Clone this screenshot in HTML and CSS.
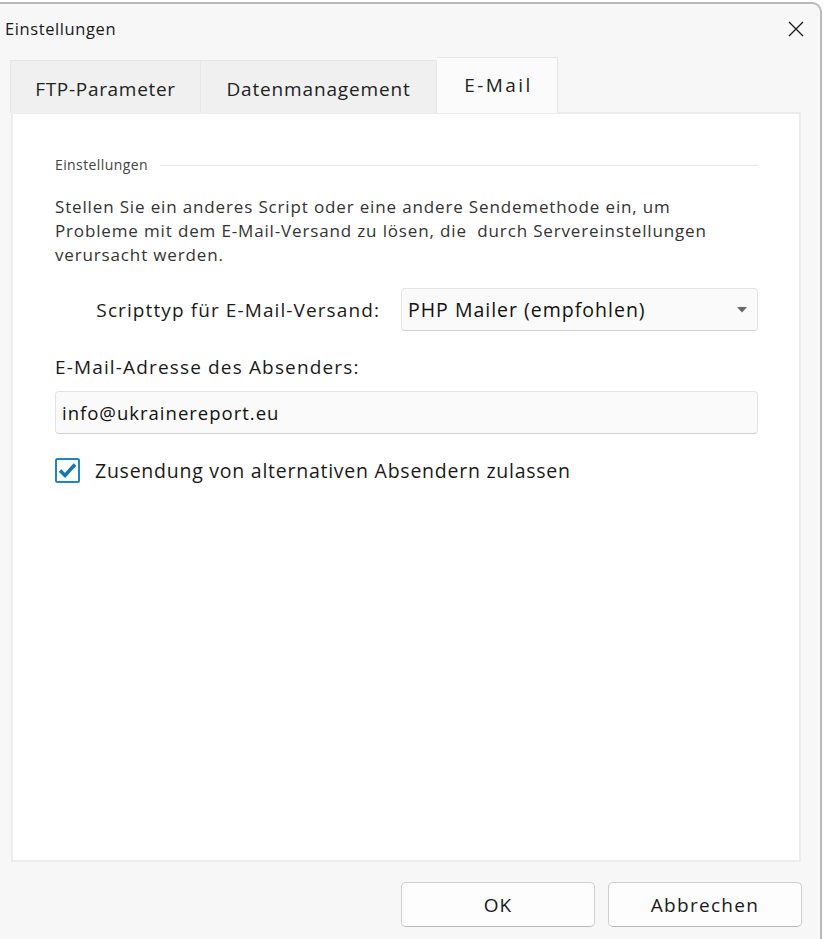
FILE: index.html
```html
<!DOCTYPE html>
<html lang="de">
<head>
<meta charset="utf-8">
<title>Einstellungen</title>
<link rel="stylesheet" href="styles.css">
</head>
<body>
<div class="window">
  <div class="titlebar">
    <span class="title">Einstellungen</span>
    <svg class="close" width="16" height="16" viewBox="0 0 16 16"><path d="M1 1 L15 15 M15 1 L1 15" stroke="#1a1a1a" stroke-width="1.3" fill="none"/></svg>
  </div>
  <div class="tabs">
    <div class="tab tab-ftp">FTP-Parameter</div>
    <div class="tab tab-data">Datenmanagement</div>
    <div class="tab active">E-Mail</div>
  </div>
  <div class="panel">
    <div class="group-head"><span>Einstellungen</span><div class="rule"></div></div>
    <p class="desc">Stellen Sie ein anderes Script oder eine andere Sendemethode ein, um<br>Probleme mit dem E-Mail-Versand zu lösen, die&nbsp; durch Servereinstellungen<br>verursacht werden.</p>
    <div class="row">
      <span class="row-label">Scripttyp für E-Mail-Versand:</span>
      <div class="select">
        <span>PHP Mailer (empfohlen)</span>
        <svg class="caret" width="10" height="6" viewBox="0 0 10 6"><path d="M0 0 H10 L5 5.5 Z" fill="#666"/></svg>
      </div>
    </div>
    <div class="field-label">E-Mail-Adresse des Absenders:</div>
    <div class="input">info@ukrainereport.eu</div>
    <div class="check">
      <svg class="box" width="25" height="25" viewBox="0 0 25 25"><rect x="1" y="1" width="23" height="23" rx="1.5" fill="#fff" stroke="#1c86c2" stroke-width="2"/><path d="M5 12.5 L10 17.5 L20 6.5" fill="none" stroke="#1677b2" stroke-width="3.6" stroke-linejoin="miter"/></svg>
      <span>Zusendung von alternativen Absendern zulassen</span>
    </div>
  </div>
  <div class="footer">
    <button class="btn btn-ok">OK</button>
    <button class="btn btn-cancel">Abbrechen</button>
  </div>
</div>
</body>
</html>
```

FILE: styles.css
```css
* { box-sizing: border-box; }
html, body { margin: 0; padding: 0; background: #ffffff; }
body { font-family: "Open Sans", "Noto Sans", sans-serif; color: #1a1a1a; }

.window {
  margin-top: 2px;
  width: 822px;
  height: 937px;
  background: #f7f7f7;
  border-top: 2px solid #b9b9b9;
  border-right: 2px solid #b9b9b9;
  border-top-right-radius: 10px;
  display: flex;
  flex-direction: column;
  padding-left: 11px;
}

.titlebar {
  height: 53px;
  display: flex;
  align-items: center;
  justify-content: space-between;
  margin-left: -6px;
  padding-right: 16px;
  padding-bottom: 4px;
}
.title { font-size: 16.5px; color: #1a1a1a; letter-spacing: 0.6px; }
.close { width: 16px; height: 16px; }

.tabs {
  display: flex;
  align-items: flex-end;
  height: 56px;
  position: relative;
  z-index: 1;
  margin-bottom: -1px;
}
.tab {
  height: 53px;
  background: #f0f0f0;
  border: 1px solid #e6e6e6;
  border-bottom: none;
  font-size: 19px;
  color: #222;
  display: flex;
  align-items: center;
  justify-content: center;
  padding-top: 3px;
}
.tab-ftp { width: 191px; margin-left: -1px; letter-spacing: 0.7px; }
.tab-data { width: 236px; border-left: none; letter-spacing: 0.85px; }
.tab.active {
  width: 121px;
  height: 56px;
  background: #fbfbfb;
  border-left: none;
  padding-top: 0;
  padding-bottom: 2px;
  letter-spacing: 2.4px;
  padding-left: 3px;
}

.panel {
  width: 790px;
  height: 750px;
  background: #ffffff;
  border: 2px solid #ececec;
  padding: 38px 41px 0 42px;
  display: flex;
  flex-direction: column;
}

.group-head {
  display: flex;
  align-items: center;
  gap: 12px;
  font-size: 14px;
  color: #444;
  height: 24px;
  letter-spacing: 0.4px;
}
.rule { flex: 1; height: 1px; background: #e6e6e6; margin-top: 2px; }

.desc {
  margin: 19px 0 0 0;
  font-size: 17px;
  line-height: 24px;
  color: #333;
  letter-spacing: 0.85px;
}

.row {
  display: flex;
  align-items: center;
  justify-content: flex-end;
  gap: 21px;
  margin-top: 21px;
}
.row-label { font-size: 19px; color: #1a1a1a; letter-spacing: 1.1px; }
.select {
  width: 357px;
  height: 43px;
  border: 1px solid #e3e3e3;
  border-bottom-color: #d0d0d0;
  border-radius: 4px;
  background: #fafafa;
  display: flex;
  align-items: center;
  justify-content: space-between;
  padding: 0 10px 0 6px;
  font-size: 19.5px;
  color: #111;
  letter-spacing: 1px;
}

.field-label {
  margin-top: 23px;
  font-size: 19px;
  color: #1a1a1a;
  line-height: 26px;
  letter-spacing: 1.15px;
}

.input {
  margin-top: 11px;
  height: 43px;
  border: 1px solid #e3e3e3;
  border-bottom-color: #cfcfcf;
  border-radius: 4px;
  background: #fafafa;
  display: flex;
  align-items: center;
  padding-left: 6px;
  font-size: 18.5px;
  color: #111;
  letter-spacing: 1px;
}

.check {
  margin-top: 23px;
  display: flex;
  align-items: center;
  gap: 15px;
  font-size: 19.5px;
  color: #1a1a1a;
  letter-spacing: 0.75px;
}
.box { flex: none; }

.footer {
  flex: 1;
  display: flex;
  justify-content: flex-end;
  align-items: flex-start;
  gap: 13px;
  padding-top: 20px;
  padding-right: 18px;
}
.btn {
  width: 194px;
  height: 45px;
  border: 1px solid #cfcfcf;
  border-bottom-color: #b8b8b8;
  border-radius: 5px;
  background: #fdfdfd;
  font-family: "Open Sans", "Noto Sans", sans-serif;
  font-size: 19px;
  color: #1a1a1a;
  padding: 0;
}
.btn-ok { letter-spacing: 1px; }
.btn-cancel { letter-spacing: 1.3px; }
```
